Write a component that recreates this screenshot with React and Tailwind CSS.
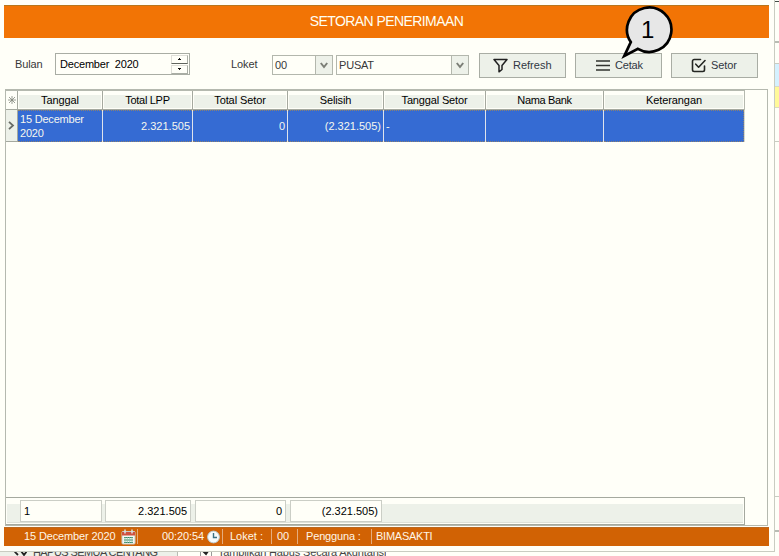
import React from "react";

const columns = [
  { title: "Tanggal", cls: "w-[85px]", track: "tracking-[-.1px]", value: "15 December 2020", align: "justify-start pl-[2px]" },
  { title: "Total LPP", cls: "w-[90px]", track: "tracking-[-.3px]", value: "2.321.505", align: "justify-end pr-[2px]" },
  { title: "Total Setor", cls: "w-[95px]", track: "tracking-[-.1px]", value: "0", align: "justify-end pr-[2px]" },
  { title: "Selisih", cls: "w-[96px]", track: "tracking-[-.1px]", value: "(2.321.505)", align: "justify-end pr-[2px]" },
  { title: "Tanggal Setor", cls: "w-[102px]", track: "tracking-[-.15px]", value: "-", align: "justify-start pl-[2px]" },
  { title: "Nama Bank", cls: "w-[118px]", track: "tracking-[-.35px]", value: "", align: "" },
  { title: "Keterangan", cls: "w-[140px]", track: "tracking-[-.1px]", value: "", align: "" },
];

function Combo({ value, width }) {
  return (
    <div className={`flex h-5 border border-[#b3b7ad] ${width}`}>
      <span className="flex-1 pl-[2px] text-[11px] leading-[19px] tracking-[-.2px] text-[#383838]">{value}</span>
      <span className="flex w-[17px] items-center justify-center border-l border-[#b3b7ad] bg-[#edf1e9]">
        <svg width="8" height="7" viewBox="0 0 8 7" fill="none" stroke="#7b7e76" strokeWidth="2">
          <path d="M.8 1 4 5 7.2 1" />
        </svg>
      </span>
    </div>
  );
}

function ToolButton({ icon, label, className }) {
  return (
    <button className={`flex h-[25px] w-[87px] items-center border border-[#a9ada4] bg-[#edf1e9] text-[11px] text-[#303743] ${className}`}>
      {icon}
      {label}
    </button>
  );
}

function FilterIcon() {
  return (
    <svg className="mr-[5px]" width="15" height="15" viewBox="0 0 15 15" fill="none" stroke="#202020" strokeWidth="1.5" strokeLinejoin="round">
      <path d="M1 1.5h13L9 7.5v4L6 13.8V7.5Z" />
    </svg>
  );
}

function MenuIcon() {
  return (
    <svg className="mr-[5px]" width="14" height="13" viewBox="0 0 14 13" stroke="#30332e" strokeWidth="1.7">
      <path d="M0 2h14M0 6.5h14M0 11h14" />
    </svg>
  );
}

function CheckIcon() {
  return (
    <svg className="mr-[5px]" width="15" height="15" viewBox="0 0 15 15" fill="none" stroke="#242622" strokeWidth="1.6" strokeLinecap="round" strokeLinejoin="round">
      <path d="M9.5 1.5H3.2A1.7 1.7 0 0 0 1.5 3.2v8.6a1.7 1.7 0 0 0 1.7 1.7h8.6a1.7 1.7 0 0 0 1.7-1.7V8" />
      <path d="m4.8 6.2 2.8 3 6.4-6.7" />
    </svg>
  );
}

function SpinButton({ up }) {
  return (
    <span className={`flex h-[9px] w-[17px] items-center justify-center border border-l-[#deded8] border-t-[#deded8] bg-[#fffff8] ${up ? "border-b-[#60645d] border-r-[#a9ada4]" : "mt-[1px] border-b-[#a9ada4] border-r-[#a9ada4]"}`}>
      <svg width="5" height="3" viewBox="0 0 5 3" shapeRendering="crispEdges">
        <path d={up ? "M2 0h1v1h1v1H1V1h1z" : "M1 0h3v1H3v1H2V1H1z"} fill="#111" />
      </svg>
    </span>
  );
}

function Calendar() {
  return (
    <svg width="15" height="16" viewBox="0 0 15 16">
      <rect x="1" y="2.5" width="13" height="12.5" rx="1" fill="#f5f7f2" stroke="#c9cbc6" />
      <path d="M1 3h13v3.5H1z" fill="#cf5140" />
      <path d="M4 .5v4M11 .5v4" stroke="#d8e4e8" strokeWidth="1.5" />
      <path d="M3 8.5h9M3 11h9M3 13.5h9" stroke="#2f8563" strokeWidth="1.2" />
      <path d="M4 8v6M6.3 8v6M8.7 8v6M11 8v6" stroke="#8fc0a8" strokeWidth=".8" />
    </svg>
  );
}

function Clock() {
  return (
    <svg width="13" height="14" viewBox="0 0 13 14">
      <circle cx="6.5" cy="7" r="5.9" fill="#f7fbfb" stroke="#b9cbd1" />
      <path d="M6.5 3v4.5H10" fill="none" stroke="#397184" strokeWidth="1.4" />
    </svg>
  );
}

function Callout() {
  return (
    <div className="absolute left-[620px] top-[4px] h-[56px] w-[54px]">
      <svg width="54" height="58" viewBox="0 0 54 58">
        <path d="M10.8 38.1A22.2 22.2 0 1 1 17.9 44.8L4.3 52Z" fill="#e7e7e7" stroke="#000" strokeWidth="2.7" strokeLinejoin="miter" />
      </svg>
      <span className="absolute left-[21px] top-[14px] text-[24px] leading-[24px] text-black">1</span>
    </div>
  );
}

function DataGrid() {
  return (
    <main className="ml-[5px] flex h-[437px] w-[763px] flex-col border border-[#b5b9af] text-[11px]">
      <div className="flex h-[20px] w-[739px] border-r border-t border-[#b5b9af] text-black">
        <span className="flex w-[12px] shrink-0 items-center justify-center border-b border-r border-[#a5a99f]">
          <svg width="8" height="8" viewBox="0 0 8 8" stroke="#81857b" strokeWidth=".8">
            <path d="M4 0v8M0 4h8M1 1l6 6M7 1 1 7" />
          </svg>
        </span>
        {columns.map((c, i) => (
          <div key={c.title} className={`shrink-0 border-b border-[#a5a99f] px-[1px] pb-[1px] pt-[4px] ${c.cls} ${i < 6 ? "border-r" : ""}`}>
            <div className={`h-full bg-[#edf1e9] text-center leading-[10px] ${c.track}`}>{c.title}</div>
          </div>
        ))}
      </div>
      <div className="flex h-[32px] w-[739px] border-r border-[#d6d9ce] text-[#f6f7ef]">
        <span className="flex w-[12px] shrink-0 items-center justify-center border-b border-r border-[#a5a99f] bg-[#edf1e9]">
          <svg width="7" height="9" viewBox="0 0 7 9" fill="none" stroke="#686b65" strokeWidth="1.8">
            <path d="m1 .8 4 3.7-4 3.7" />
          </svg>
        </span>
        {columns.map((c, i) => (
          <div key={c.title} className={`flex shrink-0 ${i < 6 ? "border-r border-[#dfe3ec]" : ""} ${c.cls}`}>
            <div className={`flex w-full items-center border-y border-dotted border-[#8c8170] bg-[#356bd3] leading-[14px] ${c.align} ${i === 6 ? "border-r" : ""}`}>
              {i === 0 ? <span className="tracking-[-.2px]">15 December<br />2020</span> : <span>{c.value}</span>}
            </div>
          </div>
        ))}
      </div>
      <div className="flex-1" />
      <div className="flex h-[28px] w-[739px] border border-l-0 border-[#a5a99f] p-[1px] text-black">
        <div className="mt-[5px] flex w-full border-b border-[#dde0d8] bg-[#edf1e9]">
          <span className="-mt-[4px] ml-[13px] h-[22px] w-[82px] border border-[#cbcec6] bg-[#fffff8] pl-[3px] leading-[21px]">1</span>
          <span className="-mt-[4px] ml-[3px] h-[22px] w-[86px] border border-[#cbcec6] bg-[#fffff8] pr-[3px] text-right leading-[21px]">2.321.505</span>
          <span className="-mt-[4px] ml-[4px] h-[22px] w-[91px] border border-[#cbcec6] bg-[#fffff8] pr-[3px] text-right leading-[21px]">0</span>
          <span className="-mt-[4px] ml-[4px] h-[22px] w-[92px] border border-[#cbcec6] bg-[#fffff8] pr-[3px] text-right leading-[21px]">(2.321.505)</span>
        </div>
      </div>
    </main>
  );
}

export default function App() {
  return (
    <div className="relative flex h-[556px] w-[779px] flex-col overflow-hidden bg-[#fffff8] font-['Liberation_Sans',Arial,sans-serif]">
      <div className="flex h-[552px]">
        <section className="flex w-[775px] flex-col border-b border-r border-[#c9ccc1]">
          <h1 className="ml-[4px] mt-[5px] h-[33px] w-[765px] border-t border-[#b8761b] bg-[#f27405] text-center text-[14px] leading-[31px] text-[#fffff2]">
            <span className="tracking-[-.58px]">SETORAN PENERIMAAN</span>
          </h1>
          <div className="flex h-[51px] pl-[15px] pt-[15px] text-[11px] text-[#383838]">
            <span className="w-[40px] pt-[3px] tracking-[-.15px]">Bulan</span>
            <div className="flex h-[22px] w-[135px] justify-between border border-[#a9ada4] pl-[4px] pr-[1px] text-black">
              <span className="whitespace-pre leading-[21px] tracking-[-.2px]">December  2020</span>
              <span className="pt-[1px]"><SpinButton up /><SpinButton /></span>
            </div>
            <span className="ml-[41px] w-[41px] pt-[3px] tracking-[-.1px]">Loket</span>
            <div className="flex gap-[3px] pt-[2px]">
              <Combo value="00" width="w-[61px]" />
              <Combo value="PUSAT" width="w-[133px]" />
            </div>
            <div className="ml-[10px] flex gap-[9px]">
              <ToolButton icon={<FilterIcon />} label="Refresh" className="pl-[13px]" />
              <ToolButton icon={<MenuIcon />} label="Cetak" className="pl-[20px] tracking-[-.2px]" />
              <ToolButton icon={<CheckIcon />} label="Setor" className="pl-[19px] tracking-[-.1px]" />
            </div>
          </div>
          <DataGrid />
          <footer className="ml-[4px] mt-[1px] flex h-[19px] w-[765px] shrink-0 items-center border-t border-[#bc6820] bg-[#d16204] pb-[1px] text-[11px] text-[#fff6e7]">
            <span className="ml-[20px] w-[97px] tracking-[-.13px]">15 December 2020</span>
            <Calendar />
            <span className="ml-[1px] h-[15px] w-px bg-[#e5ac7d]" />
            <span className="ml-[24px] w-[45px] tracking-[-.1px]">00:20:54</span>
            <Clock />
            <span className="ml-[2px] h-[15px] w-px bg-[#e5ac7d]" />
            <span className="ml-[7px] w-[41px]">Loket :</span>
            <span className="h-[15px] w-px bg-[#e5ac7d]" />
            <span className="ml-[5px] w-[20px]">00</span>
            <span className="h-[15px] w-px bg-[#e5ac7d]" />
            <span className="ml-[8px] w-[65px] tracking-[-.15px]">Pengguna :</span>
            <span className="h-[15px] w-px bg-[#e5ac7d]" />
            <span className="ml-[4px] tracking-[-.25px]">BIMASAKTI</span>
          </footer>
        </section>
        <aside className="flex w-[4px] flex-col">
          <span className="mt-[1px] h-px bg-[#434b45]" />
          <span className="mt-[39px] h-[2px] bg-[#b9bcb3]" />
          <span className="mt-[20px] h-[23px] border-t border-[#c9ccc1] bg-[#d5f1ff]" />
          <span className="h-[22px] border-y border-[#d9dac3] bg-[#fff999]" />
          <span className="mt-[33px] h-px bg-[#c9ccc1]" />
          <span className="mt-[354px] h-px bg-[#c9ccc1]" />
          <span className="mt-[33px] h-[2px] bg-[#b9bcb3]" />
        </aside>
      </div>
      <div className="flex h-[4px] overflow-hidden text-[11px] text-[#444]">
        <div className="flex w-[178px] overflow-hidden border-r border-[#b9bcb3] bg-[#edf1e9] pl-[14px]">
          <svg className="-mt-[9px] mr-[6px] shrink-0" width="13" height="13" viewBox="0 0 13 13" fill="none" stroke="#222" strokeWidth="1.8"><path d="M4 12 1 9V4M7 8l3 4 3-4" /></svg>
          <span className="-mt-[7px] whitespace-nowrap leading-[14px] tracking-[-.58px]">HAPUS SEMUA CENTANG</span>
        </div>
        <div className="flex overflow-hidden pl-[22px]">
          <span className="-mt-[8px] flex h-[13px] w-[12px] items-center justify-center border border-[#999]">
            <svg width="9" height="10" viewBox="0 0 9 10" fill="none" stroke="#222" strokeWidth="2"><path d="m1 5 3 3 4-6" /></svg>
          </span>
          <span className="-mt-[7px] ml-[6px] whitespace-nowrap leading-[14px] tracking-[-.15px]">Tampilkan Hapus Secara Akuntansi</span>
        </div>
      </div>
      <Callout />
    </div>
  );
}
